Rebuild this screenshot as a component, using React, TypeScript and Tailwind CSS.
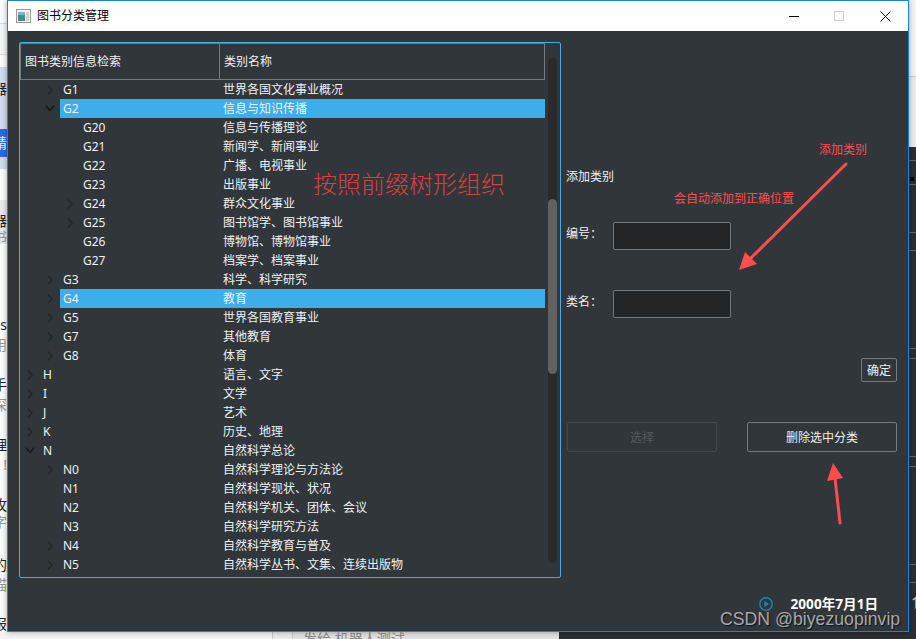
const rows = [
  { code: "G1", name: "世界各国文化事业概况", level: 1, arrow: "right" },
  { code: "G2", name: "信息与知识传播", level: 1, arrow: "down", selected: true },
  { code: "G20", name: "信息与传播理论", level: 2 },
  { code: "G21", name: "新闻学、新闻事业", level: 2 },
  { code: "G22", name: "广播、电视事业", level: 2 },
  { code: "G23", name: "出版事业", level: 2 },
  { code: "G24", name: "群众文化事业", level: 2, arrow: "right" },
  { code: "G25", name: "图书馆学、图书馆事业", level: 2, arrow: "right" },
  { code: "G26", name: "博物馆、博物馆事业", level: 2 },
  { code: "G27", name: "档案学、档案事业", level: 2 },
  { code: "G3", name: "科学、科学研究", level: 1, arrow: "right" },
  { code: "G4", name: "教育", level: 1, arrow: "right", selected: true },
  { code: "G5", name: "世界各国教育事业", level: 1, arrow: "right" },
  { code: "G7", name: "其他教育", level: 1, arrow: "right" },
  { code: "G8", name: "体育", level: 1, arrow: "right" },
  { code: "H", name: "语言、文字", level: 0, arrow: "right" },
  { code: "I", name: "文学", level: 0, arrow: "right" },
  { code: "J", name: "艺术", level: 0, arrow: "right" },
  { code: "K", name: "历史、地理", level: 0, arrow: "right" },
  { code: "N", name: "自然科学总论", level: 0, arrow: "down" },
  { code: "N0", name: "自然科学理论与方法论", level: 1, arrow: "right" },
  { code: "N1", name: "自然科学现状、状况", level: 1 },
  { code: "N2", name: "自然科学机关、团体、会议", level: 1 },
  { code: "N3", name: "自然科学研究方法", level: 1 },
  { code: "N4", name: "自然科学教育与普及", level: 1, arrow: "right" },
  { code: "N5", name: "自然科学丛书、文集、连续出版物", level: 1, arrow: "right" },
];

const indents = ["w-0", "w-5", "w-10"];

// what can be seen of the page behind the window, left of it
const leftStrip = [
  { h: "h-[23px]", bg: "bg-[#fdfdfd]" },
  { h: "h-[1px]", bg: "bg-[#dddddd]" },
  { h: "h-[30px]", bg: "bg-[#f6f6f6]" },
  { h: "h-[1px]", bg: "bg-[#dddddd]" },
  { h: "h-[12px]", bg: "bg-[#fdfdfd]" },
  { h: "h-[13px]", bg: "bg-[#d5dcef]" },
  { h: "h-[18px]", bg: "bg-[#d5dcef]", text: "器", color: "text-[#222222]" },
  { h: "h-[31px]", bg: "bg-[#d5dcef]" },
  { h: "h-[5px]", bg: "bg-[#2a6ae9]" },
  { h: "h-[18px]", bg: "bg-[#2a6ae9]", text: "精", color: "text-white" },
  { h: "h-[5px]", bg: "bg-[#2a6ae9]" },
  { h: "h-[12px]", bg: "bg-[#d5dcef]" },
  { h: "h-[31px]", bg: "bg-[#fdfdfd]" },
  { h: "h-[12px]", bg: "bg-[#eaeaea]" },
  { h: "h-[18px]", bg: "bg-[#eaeaea]", text: "器", color: "text-[#222222]" },
  { h: "h-[14px]", bg: "bg-[#eaeaea]", text: "书", color: "text-[#999999]" },
  { h: "h-[72px]", bg: "bg-[#fdfdfd]" },
  { h: "h-[18px]", bg: "bg-[#fdfdfd]", text: "es", color: "text-[#222222]" },
  { h: "h-[2px]", bg: "bg-[#fdfdfd]" },
  { h: "h-[18px]", bg: "bg-[#fdfdfd]", text: "用", color: "text-[#999999]" },
  { h: "h-[22px]", bg: "bg-[#fdfdfd]" },
  { h: "h-[18px]", bg: "bg-[#fdfdfd]", text: "手", color: "text-[#222222]" },
  { h: "h-[2px]", bg: "bg-[#fdfdfd]" },
  { h: "h-[18px]", bg: "bg-[#fdfdfd]", text: "深", color: "text-[#999999]" },
  { h: "h-[22px]", bg: "bg-[#fdfdfd]" },
  { h: "h-[18px]", bg: "bg-[#fdfdfd]", text: "理", color: "text-[#222222]" },
  { h: "h-[2px]", bg: "bg-[#fdfdfd]" },
  { h: "h-[18px]", bg: "bg-[#fdfdfd]", text: "!", color: "text-[#999999]" },
  { h: "h-[22px]", bg: "bg-[#fdfdfd]" },
  { h: "h-[18px]", bg: "bg-[#fdfdfd]", text: "攻", color: "text-[#222222]" },
  { h: "h-[16px]", bg: "bg-[#fdfdfd]", text: "字", color: "text-[#999999]" },
  { h: "h-[26px]", bg: "bg-[#fdfdfd]" },
  { h: "h-[18px]", bg: "bg-[#fdfdfd]", text: "的", color: "text-[#222222]" },
  { h: "h-[2px]", bg: "bg-[#fdfdfd]" },
  { h: "h-[18px]", bg: "bg-[#fdfdfd]", text: "描", color: "text-[#999999]" },
  { h: "h-[22px]", bg: "bg-[#fdfdfd]" },
  { h: "h-[16px]", bg: "bg-[#fdfdfd]", text: "报", color: "text-[#222222]" },
];

const rightLines = ["h-[14px]", "h-[24px]", "h-[56px]", "h-[18px]", "h-[98px]", "h-[10px]", "h-[98px]", "h-[10px]", "h-[98px]", "h-[18px]"];

function Chevron({ dir }: { dir: string }) {
  if (dir === "down") {
    return (
      <svg width="10" height="7" viewBox="0 0 10 7" className="text-[#141618]">
        <path d="M0.7 0.8 L5 5.2 L9.3 0.8" fill="none" stroke="currentColor" strokeWidth="1.6" />
      </svg>
    );
  }
  return (
    <svg width="6" height="10" viewBox="0 0 6 10" className="text-[#232629]">
      <path d="M0.8 0.6 L5 5 L0.8 9.4" fill="none" stroke="currentColor" strokeWidth="1.5" />
    </svg>
  );
}

function TreeRow({ row }: { row: (typeof rows)[number] }) {
  return (
    <div className="flex h-[19px] text-[12px] leading-[19px] text-[#eff0f1]">
      <div className={`${indents[row.level]} shrink-0`} />
      <div className="flex w-5 shrink-0 items-center justify-center">
        {row.arrow && <Chevron dir={row.arrow} />}
      </div>
      <div className={`flex flex-1 justify-between pl-[3px] ${row.selected ? "bg-[#3daee9]" : ""}`}>
        <span>{row.code}</span>
        <span className="w-[322px] shrink-0 whitespace-nowrap">{row.name}</span>
      </div>
    </div>
  );
}

function Tree() {
  return (
    <div className="flex h-[536px] w-[542px] shrink-0 rounded-[2px] border border-[#3daee9]">
      <div className="w-[525px] shrink-0">
        <div className="flex h-[37px] border border-[#76797c] text-[12px] text-[#eff0f1]">
          <div className="flex w-[199px] items-center border-r border-[#76797c] pl-1 pt-[1px]">图书类别信息检索</div>
          <div className="flex flex-1 items-center pl-1 pt-[1px]">类别名称</div>
        </div>
        {rows.map((row) => (
          <TreeRow key={row.code} row={row} />
        ))}
      </div>
      <div className="ml-[3px] mt-[15px] h-[505px] w-[9px] rounded-full bg-[#2a2a2a] pt-[141px]">
        <div className="h-[175px] rounded-full bg-[#616161]" />
      </div>
    </div>
  );
}

function Field({ label }: { label: string }) {
  return (
    <div className="flex items-center text-[12px] text-[#eff0f1]">
      <span className="-ml-[1px] w-[47px] pb-[4px]">{label}</span>
      <input className="h-[28px] w-[118px] rounded-[2px] border border-[#76797c] bg-[#232629]" />
    </div>
  );
}

function SidePanel() {
  return (
    <div className="ml-[6px] flex w-[330px] flex-col pt-[136px] text-[12px] text-[#eff0f1]">
      <div className="-ml-[1px] h-[18px] pt-[1px] leading-[18px]">添加类别</div>
      <div className="mt-[37px]">
        <Field label="编号：" />
      </div>
      <div className="mt-[40px]">
        <Field label="类名：" />
      </div>
      <div className="mt-[40px] flex justify-end">
        <button className="h-[24px] w-[36px] rounded-[2px] border border-[#76797c] pt-[1px]">确定</button>
      </div>
      <div className="mt-[40px] flex justify-between">
        <button disabled className="h-[30px] w-[150px] rounded-[2px] border border-[#45494d] pt-[2px] text-[#55595d]">
          选择
        </button>
        <button className="h-[30px] w-[150px] rounded-[2px] border border-[#76797c] pt-[2px]">删除选中分类</button>
      </div>
      <div className="mt-[142px] flex h-[20px] items-center justify-end gap-[18px] pr-[19px]">
        <svg width="14" height="14" viewBox="0 0 14 14" className="text-[#1a86b8]">
          <circle cx="7" cy="7" r="6.2" fill="none" stroke="currentColor" strokeWidth="1.4" />
          <path d="M5.3 3.9 L10 7 L5.3 10.1 Z" fill="currentColor" />
        </svg>
        <span className="text-[13.6px] font-bold text-white">2000年7月1日</span>
      </div>
    </div>
  );
}

function TitleBar() {
  return (
    <div className="flex h-[30px] shrink-0 items-center bg-white pl-[8px] text-[12px] text-black">
      <svg width="15" height="14" viewBox="0 0 15 14">
        <rect x="0.5" y="0.5" width="14" height="13" fill="#f2f2f2" stroke="#9a9a9a" />
        <rect x="2" y="3" width="7" height="9" fill="#3f8f8a" />
        <rect x="2" y="3" width="7" height="3" fill="#7fb0d6" />
        <rect x="10" y="3" width="3" height="9" fill="#c9d6d6" />
      </svg>
      <span className="ml-[6px]">图书分类管理</span>
      <div className="ml-auto flex items-center">
        <div className="h-[1px] w-[10px] bg-black" />
        <div className="ml-[35px] h-[10px] w-[10px] border border-[#cccccc]" />
        <svg width="11" height="11" viewBox="0 0 11 11" className="ml-[36px] mr-[17px] text-black">
          <path d="M0.5 0.5 L10.5 10.5 M10.5 0.5 L0.5 10.5" fill="none" stroke="currentColor" strokeWidth="1" />
        </svg>
      </div>
    </div>
  );
}

export default function App() {
  return (
    <div className="relative h-[639px] w-[916px] overflow-hidden bg-[#2a2e32] font-['Noto_Sans','Noto_Sans_CJK_SC',sans-serif]">
      <div className="flex h-[632px]">
        <div className="w-[7px] shrink-0 overflow-hidden">
          {leftStrip.map((s, i) => (
            <div key={i} className={`flex items-center justify-end whitespace-nowrap text-[14px] leading-none ${s.h} ${s.bg} ${s.color ?? ""}`}>
              {s.text}
            </div>
          ))}
        </div>

        <div className="relative z-10 flex h-[632px] w-[902px] shrink-0 flex-col border border-[#1883d7] shadow-[0_0_6px_rgba(0,0,0,0.35)]">
          <TitleBar />
          <div className="flex flex-1 bg-[#31363b] pl-[11px] pt-[11px]">
            <Tree />
            <div className="-mt-[11px]">
              <SidePanel />
            </div>
          </div>
        </div>

        <div className="w-[7px] shrink-0">
          <div className="h-[77px] border-b border-[#cccccc] bg-[#f5f5f5]" />
          <div className="h-[70px] bg-[#ececec]" />
          {rightLines.map((h, i) => (
            <div key={i} className={`${h} border-b border-[#666666]`}>
              {i === 2 && <div className="ml-[1px] mt-[-8px] h-[4px] w-[4px] bg-black" />}
            </div>
          ))}
          <div className="pt-[11px] pl-[2px] text-[16px] leading-[18px] text-[#cfcfcf]">1</div>
        </div>
      </div>

      <div className="flex h-[7px]">
        <div className="w-[272px] bg-[#f4f4f4]" />
        <div className="w-[20px] border-l border-[#c8c8c8] bg-[#ececec]" />
        <div className="w-[267px] overflow-hidden border-l border-[#c8c8c8] bg-[#e2e2e2] pl-[10px] text-[14px] leading-[14px] text-[#888888]">
          发给 机器人测试
        </div>
      </div>

      {/* annotations pasted on top of the screenshot */}
      <span className="absolute left-[313px] top-[166px] z-20 text-[24px] font-light leading-[36px] text-[#d94040]">
        按照前缀树形组织
      </span>
      <span className="absolute left-[819px] top-[141px] z-20 text-[12px] leading-[18px] text-[#ff4d4d]">添加类别</span>
      <span className="absolute left-[674px] top-[190px] z-20 text-[12px] leading-[18px] text-[#ff4d4d]">
        会自动添加到正确位置
      </span>
      <svg className="pointer-events-none absolute left-0 top-0 z-20" width="916" height="639" viewBox="0 0 916 639">
        <path d="M846 164 L750 259" stroke="#ff4d4d" strokeWidth="3" strokeLinecap="round" fill="none" />
        <path d="M739 270 L745 252 L757 264 Z" fill="#ff4d4d" />
        <path d="M840 523 L835 478" stroke="#ff4d4d" strokeWidth="3" strokeLinecap="round" fill="none" />
        <path d="M833 463 L827 481 L843 478 Z" fill="#ff4d4d" />
      </svg>
      <span className="absolute left-[720px] top-[609px] z-20 whitespace-nowrap font-['Liberation_Sans',sans-serif] text-[17.7px] leading-[21px] text-[#a8a8a8] [text-shadow:1px_1px_1px_#111]">
        CSDN @biyezuopinvip
      </span>
    </div>
  );
}
